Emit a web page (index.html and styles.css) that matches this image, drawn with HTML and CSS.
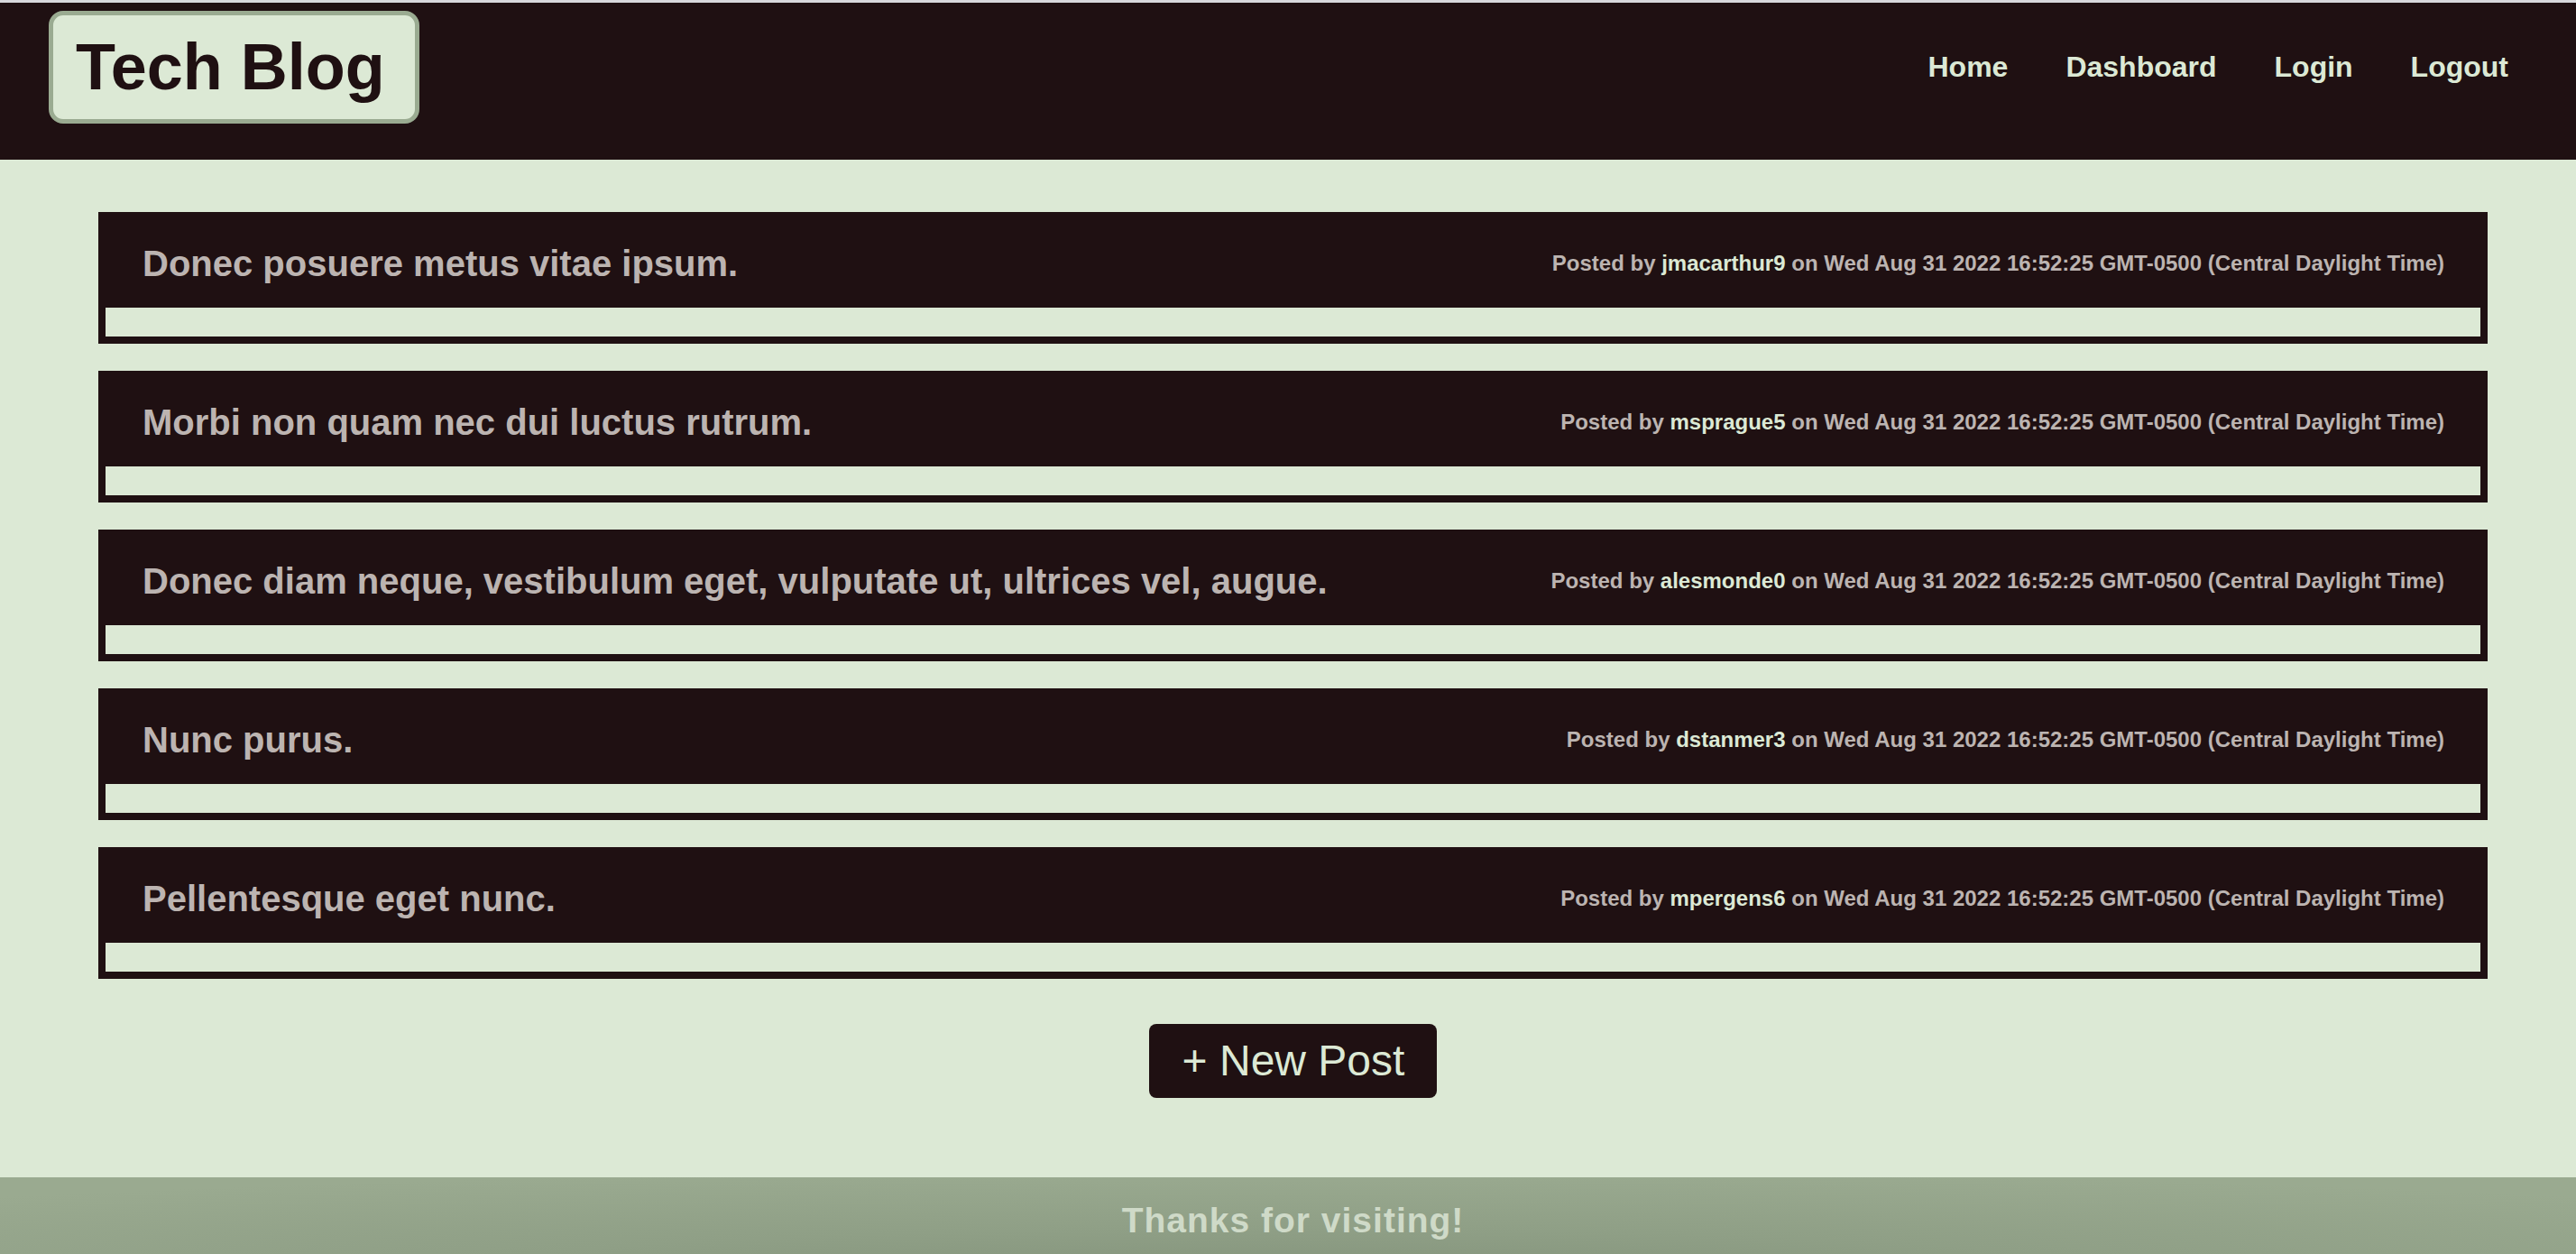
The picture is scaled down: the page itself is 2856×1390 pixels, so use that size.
FILE: index.html
```html
<!DOCTYPE html>
<html lang="en">
<head>
<meta charset="utf-8">
<title>Tech Blog</title>
<link rel="stylesheet" href="styles.css">
</head>
<body>
<header class="site-header">
  <h1 class="logo">Tech Blog</h1>
  <nav class="nav">
    <a href="#">Home</a>
    <a href="#">Dashboard</a>
    <a href="#">Login</a>
    <a href="#">Logout</a>
  </nav>
</header>
<main class="main">
  <section class="posts">
    <article class="post">
      <div class="post-head">
        <h2 class="post-title">Donec posuere metus vitae ipsum.</h2>
        <p class="post-meta">Posted by <span class="user">jmacarthur9</span> on Wed Aug 31 2022 16:52:25 GMT-0500 (Central Daylight Time)</p>
      </div>
      <div class="post-body"></div>
    </article>
    <article class="post">
      <div class="post-head">
        <h2 class="post-title">Morbi non quam nec dui luctus rutrum.</h2>
        <p class="post-meta">Posted by <span class="user">msprague5</span> on Wed Aug 31 2022 16:52:25 GMT-0500 (Central Daylight Time)</p>
      </div>
      <div class="post-body"></div>
    </article>
    <article class="post">
      <div class="post-head">
        <h2 class="post-title">Donec diam neque, vestibulum eget, vulputate ut, ultrices vel, augue.</h2>
        <p class="post-meta">Posted by <span class="user">alesmonde0</span> on Wed Aug 31 2022 16:52:25 GMT-0500 (Central Daylight Time)</p>
      </div>
      <div class="post-body"></div>
    </article>
    <article class="post">
      <div class="post-head">
        <h2 class="post-title">Nunc purus.</h2>
        <p class="post-meta">Posted by <span class="user">dstanmer3</span> on Wed Aug 31 2022 16:52:25 GMT-0500 (Central Daylight Time)</p>
      </div>
      <div class="post-body"></div>
    </article>
    <article class="post">
      <div class="post-head">
        <h2 class="post-title">Pellentesque eget nunc.</h2>
        <p class="post-meta">Posted by <span class="user">mpergens6</span> on Wed Aug 31 2022 16:52:25 GMT-0500 (Central Daylight Time)</p>
      </div>
      <div class="post-body"></div>
    </article>
  </section>
  <div class="actions">
    <button class="new-post" type="button">+ New Post</button>
  </div>
</main>
<footer class="site-footer">Thanks for visiting!</footer>
</body>
</html>
```

FILE: styles.css
```css
html, body {
  margin: 0;
  padding: 0;
}

body {
  background: #dce9d5;
  font-family: "Liberation Sans", Arial, Helvetica, sans-serif;
  overflow: hidden;
}

.site-header {
  display: flex;
  justify-content: space-between;
  align-items: center;
  background: #1f1012;
  border-top: 3px solid #d8d8dc;
  padding: 9px 75px 40px 54px;
}

.logo {
  margin: 0;
  font-size: 72px;
  font-weight: 700;
  line-height: 83px;
  color: #1f1012;
  background: #dce9d5;
  border: 5px solid #9aab91;
  border-radius: 16px;
  padding: 16px 33px 16px 25px;
}

.nav {
  display: flex;
  gap: 64px;
}

.nav a {
  color: #dce9d5;
  font-size: 32px;
  font-weight: 700;
  line-height: 37px;
  text-decoration: none;
}

.main {
  padding: 58px 98px 88px 109px;
}

.posts {
  display: flex;
  flex-direction: column;
  gap: 30px;
}

.post {
  background: #1f1012;
  border: 8px solid #1f1012;
}

.post-head {
  display: flex;
  justify-content: space-between;
  align-items: center;
  height: 98px;
  padding: 0 40px 0 41px;
}

.post-title {
  margin: 0;
  font-size: 40px;
  font-weight: 700;
  line-height: 46px;
  color: #bcb4b1;
}

.post-meta {
  margin: 0;
  font-size: 24px;
  font-weight: 700;
  line-height: 28px;
  color: #bcb4b1;
}

.post-meta .user {
  color: #dce9d5;
}

.post-body {
  height: 32px;
  background: #dce9d5;
}

.actions {
  display: flex;
  justify-content: center;
  margin-top: 50px;
}

.new-post {
  font-family: "Liberation Sans", Arial, Helvetica, sans-serif;
  font-size: 48px;
  font-weight: 400;
  line-height: 56px;
  color: #dce9d5;
  background: #1f1012;
  border: none;
  border-radius: 8px;
  padding: 13px 36px 13px 37px;
  cursor: pointer;
}

.site-footer {
  height: 85px;
  box-sizing: border-box;
  padding: 25px 0 0 11px;
  text-align: center;
  font-size: 39px;
  font-weight: 700;
  line-height: 46px;
  letter-spacing: 1px;
  color: #cfdac8;
  background: radial-gradient(ellipse 75% 140% at 50% 130%, #83937b 0%, #8f9f86 45%, #9aaa90 100%);
}
```
